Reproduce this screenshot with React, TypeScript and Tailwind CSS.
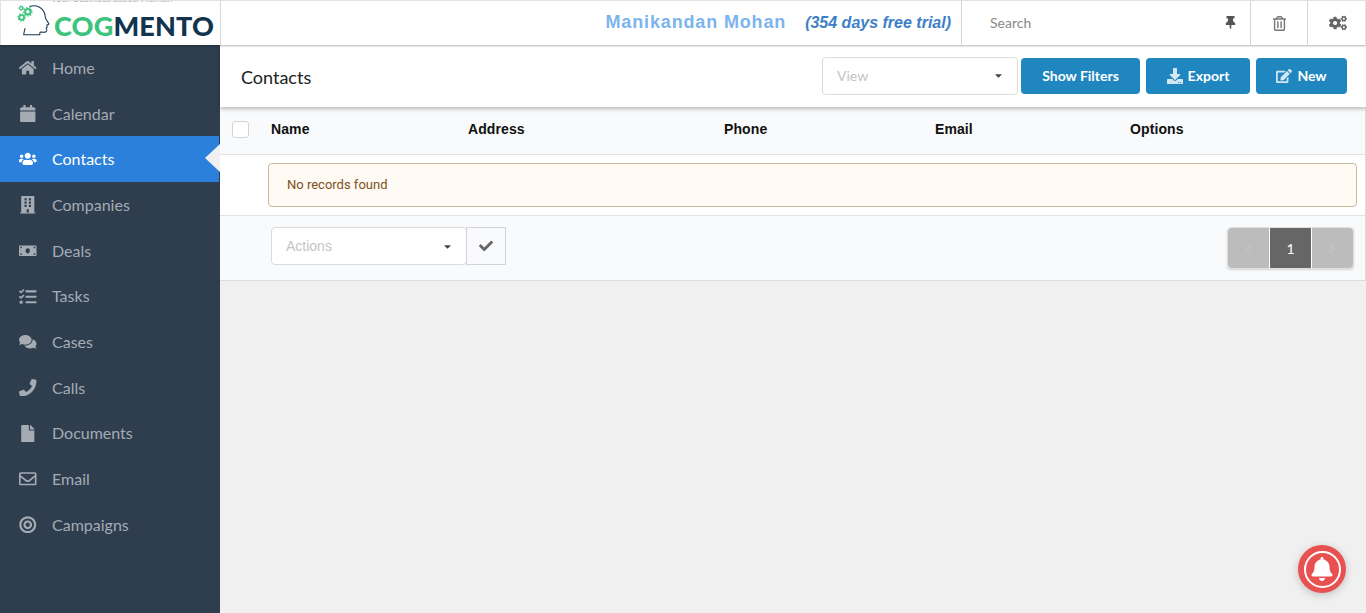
import {
  FaBell,
  FaBuilding,
  FaBullseye,
  FaCalendar,
  FaCaretDown,
  FaCheck,
  FaChevronLeft,
  FaChevronRight,
  FaCogs,
  FaComments,
  FaDownload,
  FaEdit,
  FaFile,
  FaHome,
  FaMoneyBill,
  FaPhone,
  FaRegEnvelope,
  FaRegTrashAlt,
  FaTasks,
  FaThumbtack,
  FaUsers,
} from "react-icons/fa";

const menu = [
  { label: "Home", icon: FaHome },
  { label: "Calendar", icon: FaCalendar },
  { label: "Contacts", icon: FaUsers, active: true },
  { label: "Companies", icon: FaBuilding },
  { label: "Deals", icon: FaMoneyBill },
  { label: "Tasks", icon: FaTasks },
  { label: "Cases", icon: FaComments },
  { label: "Calls", icon: FaPhone },
  { label: "Documents", icon: FaFile },
  { label: "Email", icon: FaRegEnvelope },
  { label: "Campaigns", icon: FaBullseye },
];

const columns = ["Name", "Address", "Phone", "Email", "Options"];

const Gear = ({ cx, cy, r }: { cx: number; cy: number; r: number }) => (
  <g>
    <circle cx={cx} cy={cy} r={r} fill="none" stroke="#3cc47c" strokeWidth={r * 0.75} />
    <circle cx={cx} cy={cy} r={r * 1.55} fill="none" stroke="#3cc47c" strokeWidth={r * 0.5} strokeDasharray="1.4 1.4" />
  </g>
);

const Logo = () => (
  <div className="relative flex h-full w-[220px] shrink-0 items-center overflow-hidden border-r border-[#d8d8d8] bg-white">
    <span className="absolute left-[50px] top-[-9px] whitespace-nowrap text-[10px] leading-[12px] text-[#9fb5a8]">
      Your business asset. Human
    </span>
    <svg viewBox="0 0 34 34" className="absolute left-[15px] top-[2px] h-[35px] w-[35px]">
      <path
        d="M13 3.5C20 1.2 27 4.5 28.2 12c.3 2 .2 2.7 1.2 4.2l2.4 3.6c.4.8-.2 1.3-1.8 1.6l.3 2.2-1 .8.6 1.4c.3 2-1.4 2.8-3.2 2.6l-2.7-.3c-.8 0-1 .9-.8 2.8H7.5c.3-3 .9-4.6 1.4-6.6"
        fill="none"
        stroke="#17364f"
        strokeWidth="1"
      />
      <Gear cx={5.5} cy={14} r={2.3} />
      <Gear cx={11.5} cy={8.5} r={2.6} />
      <Gear cx={5} cy={5} r={1.5} />
    </svg>
    <span className="absolute left-[53px] top-[8px] whitespace-nowrap text-[27px] font-black leading-[34px] tracking-[0.2px]">
      <span className="text-[#3cc47c]">COG</span>
      <span className="text-[#12344f]">MENTO</span>
    </span>
  </div>
);

const Header = () => (
  <header className="relative z-20 flex h-[45px] shrink-0 border border-b-0 border-[#e2e2e2] bg-white shadow-[0_1px_2px_rgba(0,0,0,0.3)]">
    <Logo />
    <div className="flex flex-1 items-center justify-end pb-[1px] pr-[10px] font-['Liberation_Sans',sans-serif] font-bold">
      <span className="text-[18px] tracking-[0.85px] text-[#7cb4ee]">Manikandan Mohan</span>
      <span className="ml-[19px] text-[16px] italic text-[#3d7fc6]">(354 days free trial)</span>
    </div>
    <div className="flex w-[289px] items-center justify-between border-l border-[#d4d4d5] pb-[1px] pl-[28px] pr-[13px] text-[14px] text-[#8a8a8a]">
      <span>Search</span>
      <FaThumbtack className="text-[13px] text-[#555]" />
    </div>
    <div className="flex w-[57px] items-center justify-center border-l border-[#d4d4d5]">
      <FaRegTrashAlt className="text-[15px] text-[#777]" />
    </div>
    <div className="flex w-[58px] items-center justify-center border-l border-[#d4d4d5] pl-[2px]">
      <FaCogs className="text-[18px] text-[#666]" />
    </div>
  </header>
);

const Sidebar = () => (
  <nav className="flex w-[220px] shrink-0 flex-col bg-[#2e3e4f]">
    {menu.map((item) => {
      const Icon = item.icon;
      return (
        <div
          key={item.label}
          className={`relative flex h-[45.7px] items-center text-[16px] ${
            item.active ? "mr-px bg-[#2b80db] text-white" : "text-[#a4abb3]"
          }`}
        >
          <span className="flex w-[52px] justify-center pl-[4px] text-[17.5px]">
            <Icon />
          </span>
          {item.label}
          {item.active && (
            <span className="absolute right-[-1px] top-[8px] h-0 w-0 border-y-[14px] border-r-[15px] border-y-transparent border-r-[#f0f0f0]" />
          )}
        </div>
      );
    })}
  </nav>
);

const SelectBox = ({ label, className }: { label: string; className: string }) => (
  <div
    className={`flex items-center justify-between rounded-[4px] border border-[#dcdcdd] bg-white pl-[14px] pr-[13px] text-[14px] text-[#c4c4c4] ${className}`}
  >
    <span>{label}</span>
    <FaCaretDown className="text-[11px] text-[#444]" />
  </div>
);

const ActionButton = ({ label, icon: Icon, className }: { label: string; icon?: typeof FaEdit; className: string }) => (
  <button
    className={`flex h-[36px] items-center justify-center gap-[5px] rounded-[4px] bg-[#1f86bf] pb-[1px] text-[14px] font-bold text-white ${className}`}
  >
    {Icon && <Icon className="text-[16px] text-white/80" />}
    {label}
  </button>
);

const Toolbar = () => (
  <div className="relative z-10 flex h-[62px] shrink-0 items-center bg-white pl-[21px] pr-[19px] shadow-[0_2px_4px_rgba(0,0,0,0.25)]">
    <h1 className="flex-1 pt-[3px] text-[18px] font-normal text-[#222]">Contacts</h1>
    <SelectBox label="View" className="h-[38px] w-[196px] pb-[1px]" />
    <ActionButton label="Show Filters" className="ml-[3px] w-[119px]" />
    <ActionButton label="Export" icon={FaDownload} className="ml-[6px] w-[104px]" />
    <ActionButton label="New" icon={FaEdit} className="ml-[6px] w-[91px]" />
  </div>
);

const Table = () => (
  <section className="border-b border-r border-[#dcdcdd] bg-white">
    <div className="grid h-[48px] grid-cols-[51px_197px_256px_211px_195px_1fr] items-center border-b border-[#e2e2e3] bg-[#f9fafb] pb-[2px] font-['Liberation_Sans',sans-serif] text-[14px] font-bold tracking-[0.1px] text-[#111]">
      <div className="pl-[12px]">
        <div className="h-[17px] w-[17px] rounded-[3px] border border-[#d4d4d5] bg-white" />
      </div>
      {columns.map((col) => (
        <div key={col}>{col}</div>
      ))}
    </div>
    <div className="h-[60px] pb-[8px] pl-[48px] pr-[8px] pt-[8px]">
      <div className="flex h-[44px] items-center rounded-[4px] border border-[#c9ba9b] bg-[#fffaf3] pl-[18px] font-['Roboto',sans-serif] text-[13px] text-[#7a5320]">
        No records found
      </div>
    </div>
    <div className="flex h-[65px] items-start justify-between border-t border-[#e2e2e3] bg-[#f9fafb] pl-[51px] pr-[11px] pt-[11px]">
      <div className="flex">
        <SelectBox label="Actions" className="h-[38px] w-[196px] font-['Liberation_Sans',sans-serif]" />
        <div className="-ml-px flex h-[38px] w-[40px] items-center justify-center border border-[#d4d4d5] bg-[#f9fafb]">
          <FaCheck className="text-[14px] text-[#666]" />
        </div>
      </div>
      <div className="flex h-[42px] gap-px rounded-[4px] border border-[#e0e0e0] bg-white shadow-[0_1px_2px_rgba(0,0,0,0.15)]">
        <div className="flex w-[41px] items-center justify-center rounded-l-[4px] bg-[#bcbcbc]">
          <FaChevronLeft className="text-[11px] text-[#c3c3c3]" />
        </div>
        <div className="flex w-[41px] items-center justify-center bg-[#666] text-[14px] text-white">1</div>
        <div className="flex w-[41px] items-center justify-center rounded-r-[4px] bg-[#bcbcbc]">
          <FaChevronRight className="text-[11px] text-[#c3c3c3]" />
        </div>
      </div>
    </div>
  </section>
);

const App = () => {
  return (
    <div className="relative flex h-screen flex-col overflow-hidden bg-[#f0f0f0] font-['Lato',sans-serif]">
      <Header />
      <div className="flex min-h-0 flex-1">
        <Sidebar />
        <main className="min-w-0 flex-1">
          <Toolbar />
          <Table />
        </main>
      </div>
      <div className="absolute bottom-[20px] right-[20px] flex h-[48px] w-[48px] items-center justify-center rounded-full bg-[#e95050] shadow-[0_2px_8px_rgba(0,0,0,0.2)]">
        <div className="flex h-[37px] w-[37px] items-center justify-center rounded-full border-2 border-white">
          <FaBell className="text-[24px] text-white" />
        </div>
      </div>
    </div>
  );
};

export default App;
